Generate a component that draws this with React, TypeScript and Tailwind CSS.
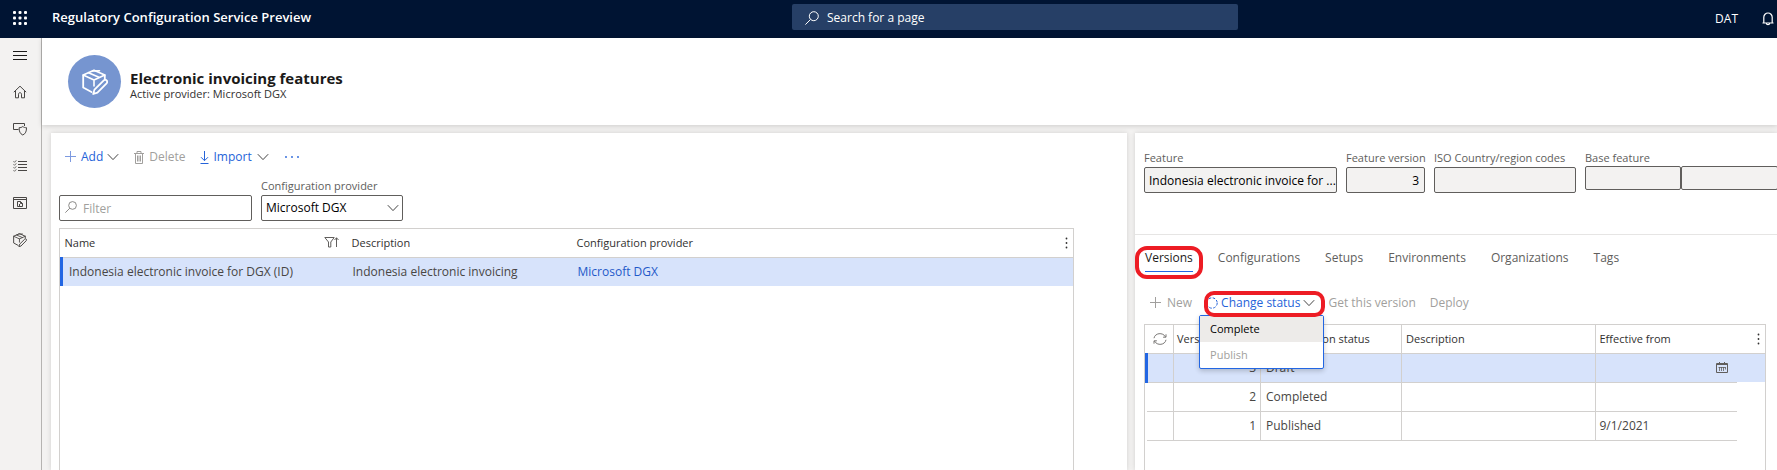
import { useState } from "react";
import type { ReactNode } from "react";

type IconProps = { className?: string };

function Svg({ className, children, box = "0 0 16 16" }: IconProps & { children: ReactNode; box?: string }) {
  return (
    <svg
      viewBox={box}
      className={className}
      fill="none"
      stroke="currentColor"
      strokeWidth="1"
      aria-hidden="true"
    >
      {children}
    </svg>
  );
}

const ChevronDown = ({ className }: IconProps) => (
  <Svg className={className} box="0 0 12 12">
    <path d="M0.8 3.2 6 8.6l5.2-5.4" />
  </Svg>
);

const Plus = ({ className }: IconProps) => (
  <Svg className={className} box="0 0 12 12">
    <path d="M5.500 0v11M0 5.500h11" />
  </Svg>
);

const Search = ({ className }: IconProps) => (
  <Svg className={className} box="0 0 14 14">
    <circle cx="8.8" cy="5.2" r="4.5" />
    <path d="M5.6 8.4.4 13.6" />
  </Svg>
);

const Waffle = () => (
  <svg viewBox="0 0 14 14" className="size-[14px]" fill="currentColor" aria-hidden="true">
    {[0, 5.5, 11].map((y) =>
      [0, 5.5, 11].map((x) => <rect key={`${x}-${y}`} x={x} y={y} width="3" height="3" rx="1" />),
    )}
  </svg>
);

const Hamburger = () => (
  <Svg className="h-[11px] w-[14px]" box="0 0 14 11">
    <path d="M0 1.5h14M0 5.5h14M0 9.5h14" />
  </Svg>
);

const Home = () => (
  <Svg className="size-[14px]" box="0 0 14 14">
    <path d="M.8 7.200 7 1.200l6.200 6M2.500 5.800v7h3V9.200c0-2 3-2 3 0v3.600h3v-7" />
  </Svg>
);

const Favorites = () => (
  <Svg className="size-[14px]" box="0 0 14 14">
    <path d="M5.500 7.500H.5v-6h11v2.500" />
    <path d="M9.800 4.500c1.200 1 2.400 1.200 3.700 1.200 0 3.500-.8 6-3.700 7.300-2.900-1.300-3.700-3.800-3.700-7.300 1.300 0 2.500-.2 3.700-1.200Z" />
  </Svg>
);

const ListIcon = () => (
  <Svg className="size-[14px]" box="0 0 14 14">
    <path d="M5 2.500h9M5 5.500h9M5 8.500h9M5 11.500h9" />
    <path d="m.5 2.300 1 1 1.800-2M.5 5.300l1 1 1.800-2M.5 8.300l1 1 1.800-2M.5 11.300l1 1 1.800-2" strokeWidth=".8" />
  </Svg>
);

const Workspace = () => (
  <Svg className="size-[14px]" box="0 0 14 14">
    <path d="M.5 1.500h13v11H.5zM.5 3.500h13" />
    <path d="M4.500 5.500h3l2 2v3h-5zM7.500 5.500v2h2M6.500 8v2.500" />
  </Svg>
);

const PackageEdit = ({ className }: IconProps) => (
  <Svg className={className} box="0 0 26 26">
    <g strokeWidth="1.800" strokeLinejoin="round" strokeLinecap="round">
      <path d="M9.500 23 1.200 18.500V6L12 1.200 22.800 6v3.500" />
      <path d="M1.200 6 12 11l10.800-5M12 11v6M6.500 3.700l11 4.800M10.500 2l7-.2" strokeWidth="1.600" />
      <path d="m11.200 25 1.300-4.400 9.300-9.200c.9-.8 2-.7 2.800 0 .8.900.8 2 0 2.900l-9.200 9.300Z" />
    </g>
  </Svg>
);

const Trash = () => (
  <Svg className="h-[13px] w-[12px]" box="0 0 12 13">
    <path d="M1 2.500h10M4 2.500v-2h4v2M2.500 2.500v10h7v-10M4.500 4.500v6M6 4.500v6M7.500 4.500v6" />
  </Svg>
);

const ImportIcon = () => (
  <Svg className="h-[13px] w-[9px]" box="0 0 9 13">
    <path d="M4.500 0v9.500M1 6.200l3.500 3.500L8 6.200M.5 12.500h8" />
  </Svg>
);

const FilterSort = () => (
  <Svg className="h-[11px] w-[15px] text-[#605e5c]" box="0 0 15 11">
    <path d="M.8.500h9.400L6.800 5v5H4.500V5ZM12.500 10V.8M10.500 3l2-2.200 2 2.200" />
  </Svg>
);

const VerticalDots = () => (
  <svg viewBox="0 0 3 12" className="h-[12px] w-[3px]" fill="currentColor" aria-hidden="true">
    <circle cx="1.500" cy="1.500" r=".9" />
    <circle cx="1.500" cy="6" r=".9" />
    <circle cx="1.500" cy="10.500" r=".9" />
  </svg>
);

const Refresh = () => (
  <Svg className="size-[14px] text-[#797775]" box="0 0 14 14">
    <path d="M1 6.200C1.800 1 9.800-.2 12.600 5M13 7.800C12.200 13 4.200 14.200 1.400 9M13 2.300v2.900h-2.900M1 11.700V8.800h2.900" />
  </Svg>
);

const DashedCircle = () => (
  <Svg className="size-[12px]" box="0 0 12 12">
    <circle cx="6" cy="6" r="5.200" strokeDasharray="2.600 1.500" />
  </Svg>
);

const Calendar = () => (
  <Svg className="h-[11px] w-[12px]" box="0 0 12 11">
    <path d="M.5 1.500h11v9H.5z" />
    <path d="M.5 2.500h11M3.500 0v2M8.500 0v2" />
    <path d="M3.500 5v4M5.500 5v4M7.500 5v4M9.500 5v2.500M2.500 5.500h7" strokeWidth=".8" />
  </Svg>
);

const Bell = () => (
  <Svg className="h-[14px] w-[12px]" box="0 0 12 14">
    <path d="M.5 11h11M1.800 11V5.200a4.200 4.200 0 0 1 8.400 0V11M4.300 11.200c.2 2 3.200 2 3.400 0" strokeWidth="1.200" />
  </Svg>
);

const navItems = [
  { label: "Home", icon: <Home /> },
  { label: "Favorites", icon: <Favorites /> },
  { label: "Recent", icon: <ListIcon /> },
  { label: "Workspaces", icon: <Workspace /> },
  { label: "Modules", icon: <PackageEdit className="size-[14px]" /> },
];

const tabs = ["Versions", "Configurations", "Setups", "Environments", "Organizations", "Tags"];

const versions = [
  { version: 3, status: "Draft", effective: "" },
  { version: 2, status: "Completed", effective: "" },
  { version: 1, status: "Published", effective: "9/1/2021" },
];

function TopBar() {
  return (
    <header className="flex h-[38px] shrink-0 items-center bg-[#001433] text-white">
      <button aria-label="App launcher" className="flex w-[41px] justify-center pr-px pb-[2px]">
        <Waffle />
      </button>
      <h1 className="flex-[740] pb-[2px] pl-[11px] text-[13px] font-semibold">
        Regulatory Configuration Service Preview
      </h1>
      <label className="mb-1 flex h-[26px] w-[446px] items-center gap-2 rounded-xs bg-[#263f66] px-[13px] pt-[2px]">
        <Search className="size-[14px]" />
        <input
          aria-label="Search for a page"
          placeholder="Search for a page"
          className="min-w-0 flex-1 bg-transparent text-xs outline-none placeholder:text-white"
        />
      </label>
      <div className="flex flex-[536] items-center justify-end gap-6 pr-[3px] pb-px">
        <span className="text-xs">DAT</span>
        <button aria-label="Notifications">
          <Bell />
        </button>
      </div>
    </header>
  );
}

function SideNav() {
  return (
    <nav className="flex w-[42px] shrink-0 flex-col border-r border-[#b5b3b1] bg-[#f3f2f1] pr-px text-[#484644]">
      <button aria-label="Expand navigation" className="flex h-[35px] items-center justify-center text-[#1b1a19]">
        <Hamburger />
      </button>
      {navItems.map((item) => (
        <button key={item.label} aria-label={item.label} className="flex h-[37px] items-center justify-center">
          {item.icon}
        </button>
      ))}
    </nav>
  );
}

function PageHeading() {
  return (
    <div className="z-10 flex h-[87px] shrink-0 items-center gap-[9px] bg-white pl-[26px] shadow-[0_1px_5px_rgba(0,0,0,0.16)]">
      <div className="flex size-[53px] items-center justify-center rounded-full bg-[#7695d0] text-white">
        <PackageEdit className="size-[26px]" />
      </div>
      <div className="pt-[6px]">
        <h2 className="text-[15px] leading-[18px] font-bold text-[#1b1a19]">Electronic invoicing features</h2>
        <p className="text-[11px] leading-[14px] text-[#323130]">Active provider: Microsoft DGX</p>
      </div>
    </div>
  );
}

function FeatureList() {
  return (
    <section className="flex min-w-0 flex-col bg-white pr-[53px] pl-2 shadow-[0_0_5px_rgba(0,0,0,0.14)]">
      <div className="flex h-12 items-center text-xs text-[#2563d9]">
        <button className="ml-[6px] flex items-center gap-1">
          <Plus className="size-[12px] text-[#7d9ae0]" />
          Add
          <ChevronDown className="size-[12px] text-[#444]" />
        </button>
        <button disabled className="ml-[14px] flex items-center gap-1 text-[#a19f9d]">
          <Trash />
          Delete
        </button>
        <button className="ml-[14px] flex items-center gap-[5px]">
          <ImportIcon />
          Import
          <ChevronDown className="size-[12px] text-[#444]" />
        </button>
        <button aria-label="More actions" className="ml-4">
          <svg viewBox="0 0 14 2" className="h-[2px] w-[14px]" fill="currentColor" aria-hidden="true">
            <circle cx="1" cy="1" r=".9" />
            <circle cx="7" cy="1" r=".9" />
            <circle cx="13" cy="1" r=".9" />
          </svg>
        </button>
      </div>
      <div className="flex items-end gap-[9px]">
        <label className="flex h-[26px] w-[193px] items-center gap-[6px] rounded-xs border border-[#605e5c] px-[5px] pt-[2px] text-[#797775]">
          <Search className="mb-1 size-[12px]" />
          <input
            aria-label="Filter"
            placeholder="Filter"
            className="min-w-0 flex-1 text-xs outline-none placeholder:text-[#a19f9d]"
          />
        </label>
        <div>
          <label htmlFor="provider" className="-mt-[2px] block pb-[2px] text-[11px] leading-[14px] text-[#605e5c]">
            Configuration provider
          </label>
          <div className="relative">
            <select
              id="provider"
              className="block h-[26px] w-[142px] appearance-none rounded-xs border border-[#605e5c] bg-white px-1 text-xs text-black"
            >
              <option>Microsoft DGX</option>
            </select>
            <ChevronDown className="pointer-events-none absolute top-[7px] right-1 size-[12px] text-[#444]" />
          </div>
        </div>
      </div>
      <div className="mt-[7px] flex-1 border border-b-0 border-[#d2d0ce]">
        <table className="w-full table-fixed text-left">
          <colgroup>
            <col className="w-[286px]" />
            <col className="w-[225px]" />
            <col />
          </colgroup>
          <thead className="text-[11px] text-[#323130]">
            <tr className="h-7 border-b border-[#d2d0ce]">
              <th className="px-[3px] font-normal">
                <div className="flex items-center justify-between pr-[6px]">
                  Name
                  <FilterSort />
                </div>
              </th>
              <th className="px-1 font-normal">Description</th>
              <th className="px-1 font-normal">
                <div className="flex items-center justify-between">
                  Configuration provider
                  <button aria-label="Grid options" className="pr-px">
                    <VerticalDots />
                  </button>
                </div>
              </th>
            </tr>
          </thead>
          <tbody className="text-xs text-[#484644]">
            <tr className="h-[29px] bg-[#d7e3fb]">
              <td className="border-l-3 border-[#2266e3] px-[6px] whitespace-nowrap">
                Indonesia electronic invoice for DGX (ID)
              </td>
              <td className="px-[5px]">Indonesia electronic invoicing</td>
              <td className="px-[5px]">
                <a href="#provider" className="text-[#1f59c9]">
                  Microsoft DGX
                </a>
              </td>
            </tr>
          </tbody>
        </table>
      </div>
    </section>
  );
}

type FieldProps = { id: string; label: string; value: string; className: string; inputClassName?: string };

function ReadOnlyField({ id, label, value, className, inputClassName = "" }: FieldProps) {
  return (
    <div className={className}>
      <label htmlFor={id} className="block pb-[2px] text-[11px] leading-[14px] whitespace-nowrap text-[#605e5c]">
        {label}
      </label>
      <input
        id={id}
        readOnly
        value={value}
        className={`block h-[26px] w-full rounded-xs border border-[#605e5c] bg-[#f3f2f1] text-xs text-black outline-none ${inputClassName}`}
      />
    </div>
  );
}

function StatusMenu() {
  return (
    <div className="relative ml-[14px]">
      <button className="flex items-center gap-[3px] text-[#2563d9]">
        <DashedCircle />
        Change status
        <ChevronDown className="size-[12px] text-[#444]" />
      </button>
      <div
        role="menu"
        className="absolute top-[20px] -left-[7px] z-10 w-[125px] rounded-xs border border-[#2266e3] bg-white text-[11px] shadow-[0_2px_5px_rgba(0,0,0,0.2)]"
      >
        <button role="menuitem" className="block h-[26px] w-full bg-[#edebe9] px-[10px] text-left text-black">
          Complete
        </button>
        <button role="menuitem" disabled className="block h-[26px] w-full px-[10px] text-left text-[#a19f9d]">
          Publish
        </button>
      </div>
      <div className="pointer-events-none absolute -top-1 -right-[10px] -bottom-[6px] -left-[2px] z-20 rounded-[10px] border-4 border-[#ed1c24]" />
    </div>
  );
}

function FeatureDetails() {
  const [active, setActive] = useState("Versions");
  return (
    <section className="flex min-w-0 flex-col overflow-hidden bg-white shadow-[0_0_5px_rgba(0,0,0,0.14)]">
      <div className="flex h-[102px] shrink-0 items-start border-b border-[#e6e5e4] pt-[18px] pl-[9px]">
        <div className="flex gap-[9px]">
          <ReadOnlyField
            id="feature"
            label="Feature"
            value="Indonesia electronic invoice for ..."
            className="w-[193px]"
            inputClassName="pl-1"
          />
          <ReadOnlyField
            id="version"
            label="Feature version"
            value="3"
            className="w-[79px]"
            inputClassName="px-[5px] text-right"
          />
          <ReadOnlyField id="iso" label="ISO Country/region codes" value="" className="w-[142px]" inputClassName="px-[5px]" />
          <fieldset>
            <legend className="pb-px text-[11px] leading-[14px] text-[#605e5c]">Base feature</legend>
            <div className="flex">
              <input
                aria-label="Base feature name"
                readOnly
                className="h-6 w-[96px] rounded-xs border border-[#605e5c] bg-[#f3f2f1] outline-none"
              />
              <input
                aria-label="Base feature version"
                readOnly
                className="h-6 w-[97px] rounded-xs border border-[#605e5c] bg-[#f3f2f1] outline-none"
              />
            </div>
          </fieldset>
        </div>
      </div>
      <div role="tablist" className="flex items-center gap-[25px] pt-[13px] pl-[10px] text-xs text-[#605e5c]">
        {tabs.map((tab) => (
          <div key={tab} className="relative">
            <button
              role="tab"
              aria-selected={tab === active}
              onClick={() => setActive(tab)}
              className={
                tab === active
                  ? "h-6 border-b border-[#2266e3] pb-1 text-[#1b1a19]"
                  : "h-6 border-b border-transparent pb-1"
              }
            >
              {tab}
            </button>
            {tab === "Versions" && (
              <div className="pointer-events-none absolute -inset-x-[10px] -top-[2px] -bottom-[7px] rounded-[12px] border-4 border-[#ed1c24]" />
            )}
          </div>
        ))}
      </div>
      <div className="flex items-center pt-[23px] pb-[13px] pl-[15px] text-xs whitespace-nowrap text-[#a19f9d]">
        <button disabled className="flex items-center gap-[5px]">
          <Plus className="size-[12px]" />
          New
        </button>
        <StatusMenu />
        <button disabled className="ml-[13px]">
          Get this version
        </button>
        <button disabled className="ml-[14px]">
          Deploy
        </button>
      </div>
      <div className="mr-[11px] ml-[9px] flex-1 border border-b-0 border-[#d2d0ce]">
        <table className="w-full table-fixed text-left">
          <colgroup>
            <col className="w-[27px]" />
            <col className="w-[87px]" />
            <col className="w-[141px]" />
            <col />
            <col className="w-[142px]" />
            <col className="w-[28px]" />
          </colgroup>
          <thead className="text-[11px] text-[#323130]">
            <tr className="h-7 border-b border-[#d2d0ce]">
              <th className="border-r border-[#d2d0ce]">
                <button aria-label="Refresh" className="flex w-full justify-center">
                  <Refresh />
                </button>
              </th>
              <th className="px-[3px] font-normal">Version</th>
              <th className="border-r border-[#d2d0ce] px-[5px] font-normal">Configuration status</th>
              <th className="border-r border-[#d2d0ce] px-1 font-normal">Description</th>
              <th className="border-l border-[#d2d0ce] px-1 font-normal">Effective from</th>
              <th>
                <button aria-label="Grid options" className="ml-auto flex pr-[5px]">
                  <VerticalDots />
                </button>
              </th>
            </tr>
          </thead>
          <tbody className="text-xs text-[#484644]">
            {versions.map((row, i) => (
              <tr key={row.version} className={i === 0 ? "h-[29px] bg-[#d7e3fb]" : "h-[29px]"}>
                <td
                  className={
                    i === 0
                      ? "border-r border-b border-l-3 border-[#d2d0ce] border-l-[#2266e3]"
                      : "border-r border-b border-[#d2d0ce]"
                  }
                />
                <td className="border-r border-b border-[#d2d0ce] px-1 text-right">{row.version}</td>
                <td className="border-r border-b border-[#d2d0ce] px-[5px]">{row.status}</td>
                <td className="border-r border-b border-[#d2d0ce]" />
                <td className="border-b border-[#d2d0ce] px-1">
                  {i === 0 ? (
                    <button aria-label="Choose date" className="ml-auto flex pr-[5px] text-[#605e5c]">
                      <Calendar />
                    </button>
                  ) : (
                    row.effective
                  )}
                </td>
                <td />
              </tr>
            ))}
          </tbody>
        </table>
      </div>
    </section>
  );
}

export default function App() {
  return (
    <div className="flex min-h-screen flex-col font-['Open_Sans','Noto_Sans',sans-serif]">
      <TopBar />
      <div className="flex flex-1">
        <SideNav />
        <main className="flex min-w-0 flex-1 flex-col bg-[#f3f2f1]">
          <PageHeading />
          <div className="grid flex-1 grid-cols-[minmax(0,1076fr)_minmax(0,642fr)] gap-2 pt-2 pl-[9px]">
            <FeatureList />
            <FeatureDetails />
          </div>
        </main>
      </div>
    </div>
  );
}
